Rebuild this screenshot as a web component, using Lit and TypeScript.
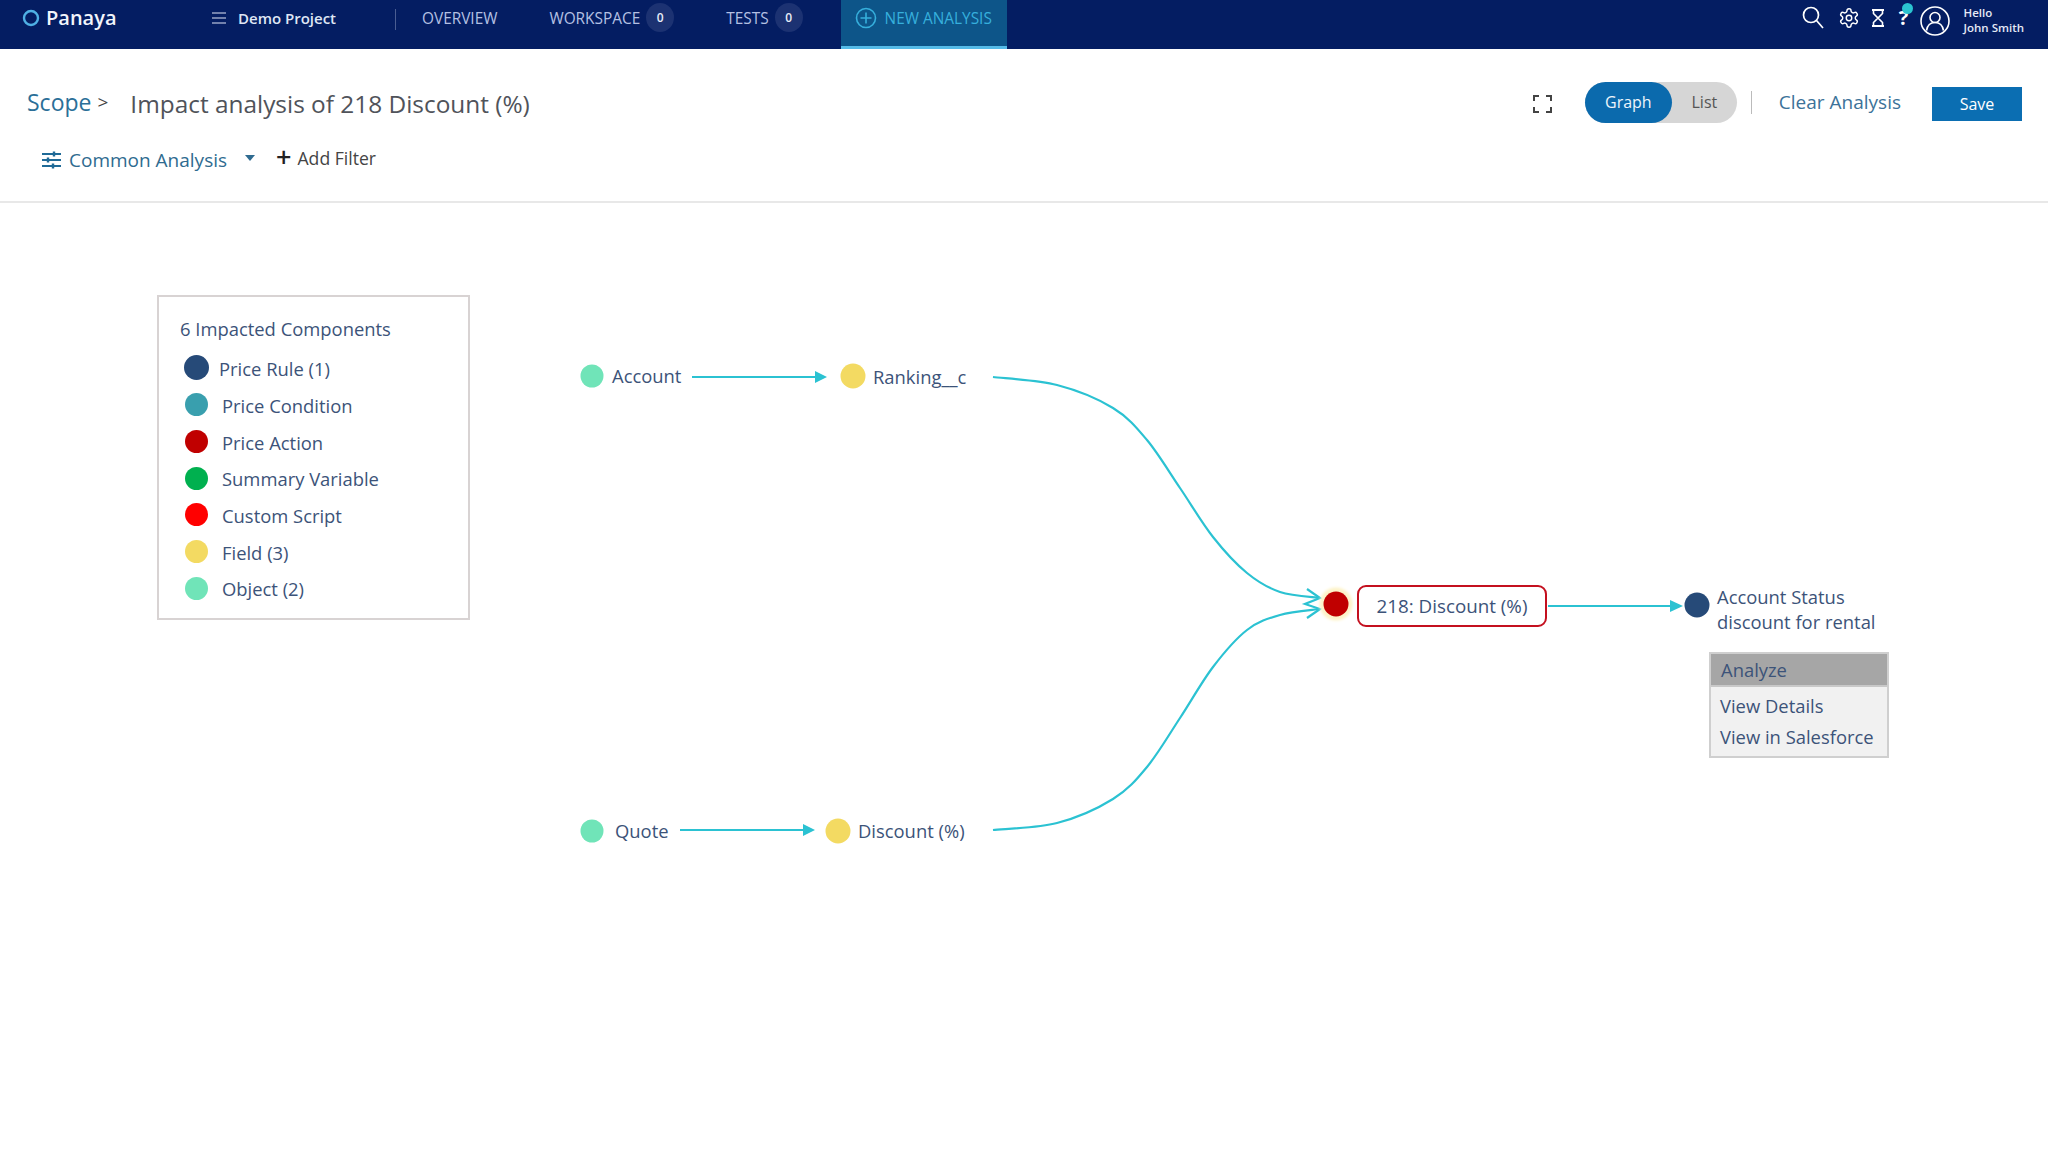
import { LitElement, html, css, svg } from "lit";
import { customElement } from "lit/decorators.js";

const TOP = 203;

const legend = [
  { c: "#264a78", l: "Price Rule (1)", big: true },
  { c: "#399fae", l: "Price Condition" },
  { c: "#c00000", l: "Price Action" },
  { c: "#00b04f", l: "Summary Variable" },
  { c: "#ff0000", l: "Custom Script" },
  { c: "#f3da62", l: "Field (3)" },
  { c: "#70e4b8", l: "Object (2)" },
];

const dots = [
  { x: 592, y: 376, r: 11.5, c: "#70e4b8" },
  { x: 853, y: 376, r: 12.5, c: "#f3da62" },
  { x: 592, y: 831, r: 11.5, c: "#70e4b8" },
  { x: 838, y: 831, r: 12.5, c: "#f3da62" },
  { x: 1697, y: 605, r: 12.5, c: "#264a78" },
];

const labels = [
  { x: 612, y: 375, t: "Account" },
  { x: 873, y: 376, t: "Ranking__c" },
  { x: 615, y: 830, t: "Quote" },
  { x: 858, y: 830, t: "Discount (%)" },
];

const upper: [number, number][] = [
  [993, 377], [1057, 385], [1113, 408], [1147, 440], [1180, 488], [1213, 537], [1247, 573], [1280, 592], [1320, 598],
];
const lower: [number, number][] = [
  [993, 830], [1057, 823], [1113, 799], [1147, 767], [1180, 718], [1213, 667], [1247, 630], [1280, 615], [1320, 609],
];

/** Smooth curve through the sampled points of an edge (Catmull-Rom to Bezier). */
function smooth(p: [number, number][]): string {
  let d = `M${p[0][0]} ${p[0][1]}`;
  for (let i = 0; i < p.length - 1; i++) {
    const a = p[Math.max(0, i - 1)];
    const b = p[i];
    const c = p[i + 1];
    const e = p[Math.min(p.length - 1, i + 2)];
    d += `C${b[0] + (c[0] - a[0]) / 6} ${b[1] + (c[1] - a[1]) / 6} ${c[0] - (e[0] - b[0]) / 6} ${c[1] - (e[1] - b[1]) / 6} ${c[0]} ${c[1]}`;
  }
  return d;
}

@customElement("app-root")
export class AppRoot extends LitElement {
  static styles = css`
    :host { display: block; min-height: 1152px; background: #fff; font-family: "Open Sans", "Liberation Sans", sans-serif; color: #3c5379; }
    header { height: 49px; box-sizing: border-box; background: #041d62; display: flex; align-items: center; padding: 0 0 13px 22px; color: #dfe6f5; }
    .logo { display: flex; align-items: center; gap: 6px; font-size: 20px; font-weight: 600; color: #f2f5fb; width: 190px; flex: none; margin-top: -1px; }
    .project { display: flex; align-items: center; gap: 12px; font-size: 15px; font-weight: 600; width: 183px; flex: none; }
    .sep { width: 1px; height: 21px; background: #4a5d92; flex: none; margin-top: 2px; }
    .tab { font-size: 15.4px; color: #b4c0e2; display: flex; align-items: center; gap: 6px; flex: none; }
    .t1 { margin-left: 26px; }
    .t2 { margin-left: 52px; }
    .t3 { margin-left: 52px; }
    .badge { width: 28px; height: 29px; border-radius: 50%; background: #1c3272; color: #e8edf8; font-size: 12px; font-weight: 600; display: flex; align-items: center; justify-content: center; margin-top: -1px; }
    .active { margin-left: 38px; height: 49px; width: 166px; box-sizing: border-box; align-self: flex-start; background: #0d5589; border-bottom: 3px solid #55bbe8; color: #36afdc; padding: 0 0 10px 14px; gap: 8px; }
    .right { margin-left: auto; display: flex; align-items: center; padding-right: 24px; }
    .right svg { display: block; flex: none; }
    .help { position: relative; color: #fff; font-size: 20px; font-weight: 700; width: 16px; text-align: center; margin-left: 11px; line-height: 1; }
    .help i { position: absolute; right: -1px; top: -5px; width: 11px; height: 11px; border-radius: 50%; background: #2bc4d0; }
    .i-gear { margin-left: 13px; }
    .i-hour { margin-left: 11px; }
    .i-user { margin-left: 8px; margin-top: 5px; }
    .hello { font-size: 11.5px; line-height: 15px; margin: 4px 0 0 14px; color: #e4e9f6; font-weight: 600; }

    .bar { height: 154px; box-sizing: border-box; border-bottom: 2px solid #e8e8e8; padding: 0 26px 0 27px; display: flex; flex-direction: column; }
    .row1 { display: flex; align-items: center; height: 60px; margin-top: 23px; }
    .scope { font-size: 23px; color: #2b6f98; }
    .gt { font-size: 19px; color: #444; margin-left: 6px; }
    .title { font-size: 24.4px; color: #50535a; margin: 3px 0 0 22px; }
    .fs { margin: 3px 0 0 auto; display: block; }
    .toggle { margin-left: 33px; width: 152px; height: 41px; border-radius: 21px; background: #d6d6d6; display: flex; align-items: center; font-size: 16px; }
    .on { width: 87px; height: 41px; border-radius: 21px; background: #0b6aad; color: #eef5fb; display: flex; align-items: center; justify-content: center; }
    .off { flex: 1; text-align: center; color: #555; }
    .vline { width: 1px; height: 23px; background: #bbb; margin-left: 14px; }
    .clear { font-size: 19px; color: #3c7299; margin: -1px 0 0 27px; }
    .save { width: 90px; height: 34px; margin: 3px 0 0 31px; background: #0b6eb2; color: #fff; font-size: 16px; display: flex; align-items: center; justify-content: center; }
    .row2 { display: flex; align-items: center; padding-left: 15px; margin-top: 8px; height: 36px; }
    .tune { margin-top: 3px; display: block; }
    .common { font-size: 19px; color: #2f6b90; margin-left: 8px; margin-top: 4px; }
    .caret { width: 0; height: 0; border-left: 5px solid transparent; border-right: 5px solid transparent; border-top: 6px solid #2f6b90; margin-left: 18px; }
    .add { font-size: 17.6px; color: #444; display: flex; align-items: center; gap: 6px; margin-left: 21px; }
    .add b { font-size: 27px; font-weight: 600; line-height: 1; color: #222; margin-top: -4px; }

    .canvas { position: relative; height: 949px; padding: 92px 0 0 157px; box-sizing: border-box; font-size: 18.4px; }
    .wires { position: absolute; left: 0; top: 0; width: 2048px; height: 949px; }
    .legend { position: relative; width: 313px; height: 325px; box-sizing: border-box; border: 2px solid #d8d3d3; padding: 20px 0 0 21px; }
    .legend h4 { margin: 0 0 9px; font-size: 18.4px; font-weight: 400; line-height: 24px; }
    .li { display: flex; align-items: center; height: 36.7px; padding-left: 5px; gap: 14px; }
    .li i { width: 23px; height: 23px; border-radius: 50%; flex: none; margin-top: -3px; }
    .li span { margin-top: -2px; }
    .li.big { padding-left: 4px; gap: 10px; height: 38px; }
    .li.big i { width: 25px; height: 25px; }
    .dot { position: absolute; border-radius: 50%; transform: translate(-50%, -50%); }
    .lbl { position: absolute; transform: translateY(-50%); white-space: nowrap; line-height: 25px; }
    .target { position: absolute; left: 1357px; top: ${585 - TOP}px; width: 190px; height: 42px; box-sizing: border-box; border: 2.5px solid #c4101f; border-radius: 9px; display: flex; align-items: center; justify-content: center; background: #fff; font-size: 18.8px; }
    .halo { background: #c00000; box-shadow: 0 0 3px 4px #fdf3c8; }
    .menu { position: absolute; left: 1709px; top: ${652 - TOP}px; width: 180px; height: 106px; box-sizing: border-box; border: 2px solid #cfcfcf; background: #f1f1f1; }
    .menu div { height: 31px; padding-left: 9px; display: flex; align-items: center; }
    .menu .hit { height: 33px; background: #a6a6a6; margin-bottom: 3px; border-bottom: 2px solid #c8c8c8; box-sizing: border-box; padding-left: 10px; }
  `;

  render() {
    const wire = "#2bc2d2";
    return html`
      <header>
        <div class="logo">
          <svg width="18" height="18" viewBox="0 0 18 18"><circle cx="9" cy="9" r="7" fill="none" stroke="#4fb0e4" stroke-width="2.4"/></svg>
          Panaya
        </div>
        <div class="project">
          <svg width="14" height="12" viewBox="0 0 14 12"><path d="M0 1h14M0 6h14M0 11h14" stroke="#dfe6f5" stroke-width="1.2"/></svg>
          Demo Project
        </div>
        <div class="sep"></div>
        <div class="tab t1">OVERVIEW</div>
        <div class="tab t2">WORKSPACE <span class="badge">0</span></div>
        <div class="tab t3">TESTS <span class="badge">0</span></div>
        <div class="tab active">
          <svg width="22" height="22" viewBox="0 0 22 22" fill="none" stroke="#36afdc" stroke-width="1.6"><circle cx="11" cy="11" r="9.5"/><path d="M11 5.5v11M5.5 11h11"/></svg>
          NEW ANALYSIS
        </div>
        <div class="right">
          <svg width="24" height="26" viewBox="0 0 24 26" fill="none" stroke="#fff" stroke-width="1.7"><circle cx="10" cy="10" r="7.5"/><path d="M15.5 15.5L22 23"/></svg>
          <svg class="i-gear" width="22" height="22" viewBox="0 0 24 24" fill="none" stroke="#fff" stroke-width="1.6"><path d="M12.22 2h-.44a2 2 0 0 0-2 2v.18a2 2 0 0 1-1 1.73l-.43.25a2 2 0 0 1-2 0l-.15-.08a2 2 0 0 0-2.73.73l-.22.38a2 2 0 0 0 .73 2.73l.15.1a2 2 0 0 1 1 1.72v.51a2 2 0 0 1-1 1.74l-.15.09a2 2 0 0 0-.73 2.73l.22.38a2 2 0 0 0 2.73.73l.15-.08a2 2 0 0 1 2 0l.43.25a2 2 0 0 1 1 1.73V20a2 2 0 0 0 2 2h.44a2 2 0 0 0 2-2v-.18a2 2 0 0 1 1-1.73l.43-.25a2 2 0 0 1 2 0l.15.08a2 2 0 0 0 2.73-.73l.22-.39a2 2 0 0 0-.73-2.73l-.15-.08a2 2 0 0 1-1-1.74v-.5a2 2 0 0 1 1-1.74l.15-.09a2 2 0 0 0 .73-2.73l-.22-.38a2 2 0 0 0-2.73-.73l-.15.08a2 2 0 0 1-2 0l-.43-.25a2 2 0 0 1-1-1.73V4a2 2 0 0 0-2-2z"/><circle cx="12" cy="12" r="3"/></svg>
          <svg class="i-hour" width="14" height="18" viewBox="0 0 14 18" fill="none" stroke="#fff" stroke-width="2"><path d="M1 1h12M1 17h12"/><path d="M2.5 1v3.5L7 9l4.5-4.5V1M2.5 17v-3.5L7 9l4.5 4.5V17" stroke-width="1.6"/></svg>
          <div class="help">?<i></i></div>
          <svg class="i-user" width="30" height="30" viewBox="0 0 30 30" fill="none" stroke="#fff" stroke-width="1.6"><circle cx="15" cy="15" r="14"/><circle cx="15" cy="11.5" r="5"/><path d="M6.5 24.5c1-6 4.5-8 8.5-8s7.5 2 8.5 8"/></svg>
          <div class="hello">Hello<br />John Smith</div>
        </div>
      </header>

      <section class="bar">
        <div class="row1">
          <span class="scope">Scope</span><span class="gt">&gt;</span>
          <span class="title">Impact analysis of 218 Discount (%)</span>
          <svg class="fs" width="19" height="18" viewBox="0 0 19 18" fill="none" stroke="#444" stroke-width="2"><path d="M1 6V1h5M13 1h5v5M18 12v5h-5M6 17H1v-5"/></svg>
          <div class="toggle"><div class="on">Graph</div><div class="off">List</div></div>
          <div class="vline"></div>
          <span class="clear">Clear Analysis</span>
          <div class="save">Save</div>
        </div>
        <div class="row2">
          <svg class="tune" width="19" height="18" viewBox="0 0 19 18" fill="none" stroke="#1f6a97" stroke-width="2"><path d="M0 3h19M0 9h19M0 15h19"/><path d="M12 0.5v5M6 6.5v5M11 12.5v5" stroke-width="2.4"/></svg>
          <span class="common">Common Analysis</span>
          <span class="caret"></span>
          <span class="add"><b>+</b>Add Filter</span>
        </div>
      </section>

      <section class="canvas">
        <svg class="wires" viewBox="0 ${TOP} 2048 949" fill="none" stroke="${wire}" stroke-width="2.2">
          ${svg`
            <path d="M692 377H816"/><path d="M815 371l12 6-12 6z" fill="${wire}" stroke="none"/>
            <path d="M680 830H804"/><path d="M803 824l12 6-12 6z" fill="${wire}" stroke="none"/>
            <path d="M1548 606H1672"/><path d="M1670 600l13 6-13 6z" fill="${wire}" stroke="none"/>
            <path d="${smooth(upper)}"/>
            <path d="${smooth(lower)}"/>
            <path d="M1307 589L1320 598L1305 604L1320 609L1307 618"/>
          `}
        </svg>
        <div class="legend">
          <h4>6 Impacted Components</h4>
          ${legend.map((i) => html`<div class="li ${i.big ? "big" : ""}"><i style="background:${i.c}"></i><span>${i.l}</span></div>`)}
        </div>
        ${dots.map((d) => html`<div class="dot" style="left:${d.x}px;top:${d.y - TOP}px;width:${d.r * 2}px;height:${d.r * 2}px;background:${d.c}"></div>`)}
        ${labels.map((l) => html`<div class="lbl" style="left:${l.x}px;top:${l.y - TOP}px">${l.t}</div>`)}
        <div class="dot halo" style="left:1336px;top:${604 - TOP}px;width:25px;height:25px"></div>
        <div class="target">218: Discount (%)</div>
        <div class="lbl" style="left:1717px;top:${609 - TOP}px">Account Status<br />discount for rental</div>
        <div class="menu">
          <div class="hit">Analyze</div>
          <div>View Details</div>
          <div>View in Salesforce</div>
        </div>
      </section>
    `;
  }
}
